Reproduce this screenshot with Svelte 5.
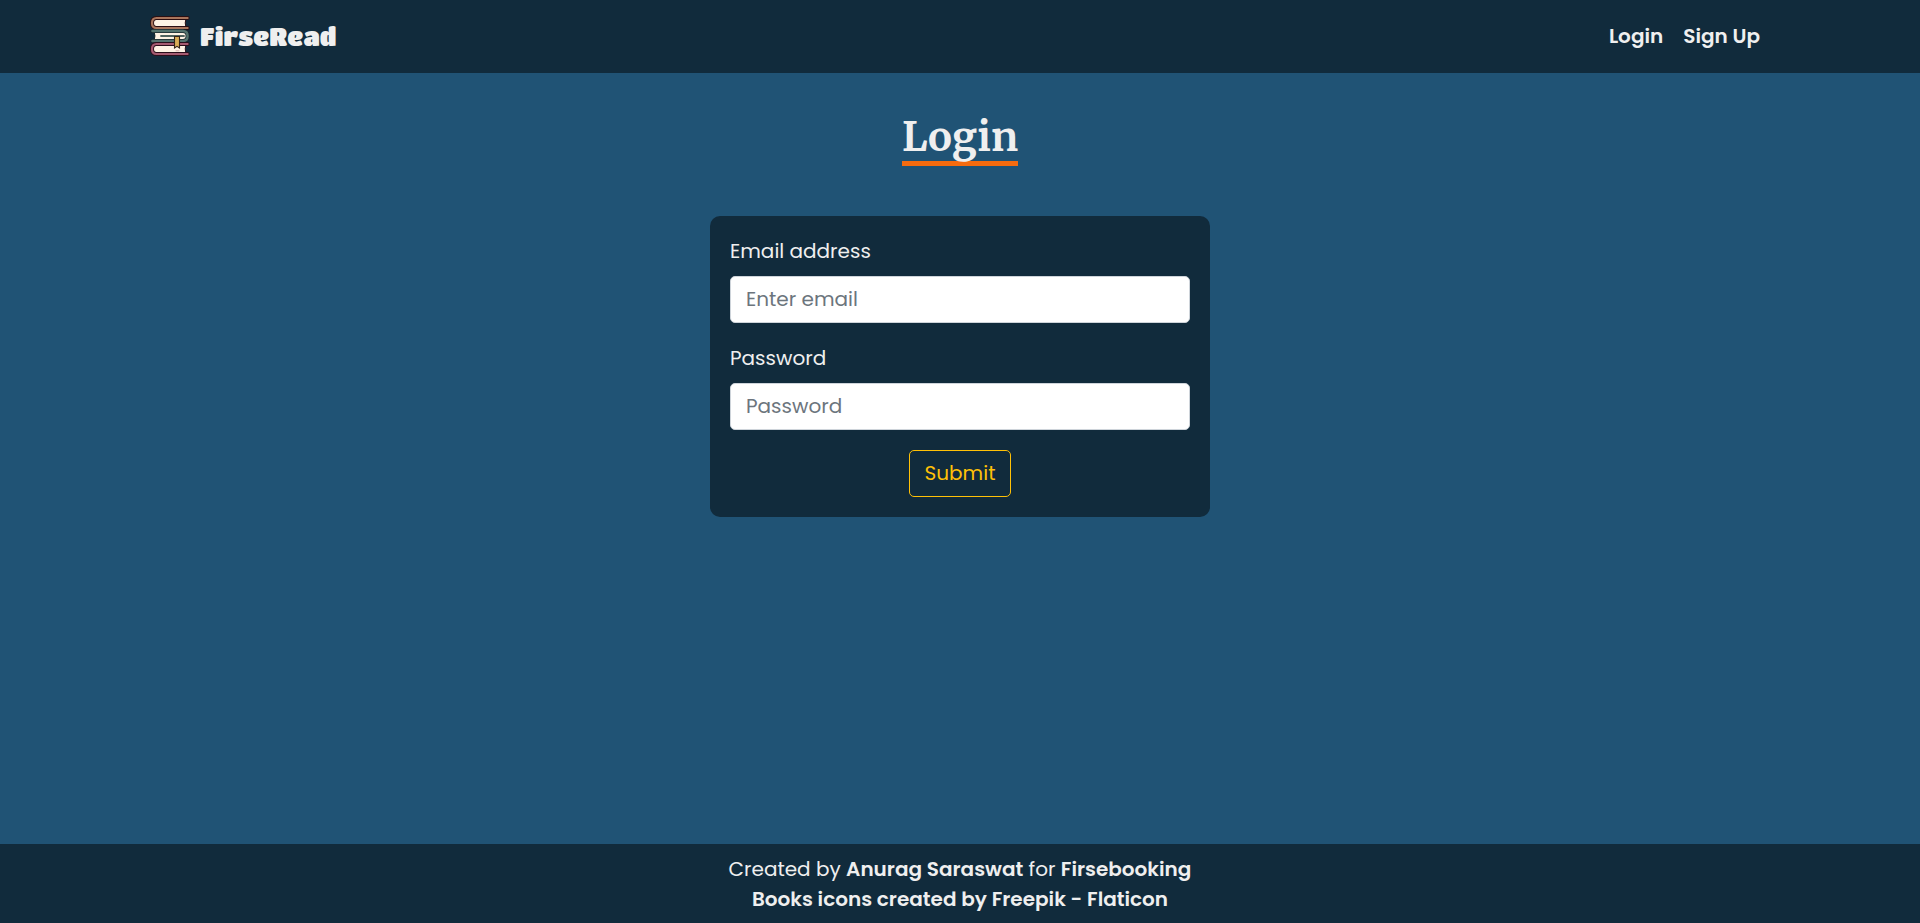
<script>
  let email = $state('');
  let password = $state('');
</script>

<div class="page">
  <header>
    <nav class="bar">
      <a class="brand" href="#home">
        <svg viewBox="0 0 40 40" width="40" height="40" aria-hidden="true">
          <g fill="none" stroke-linecap="round">
            <path d="M36 2H6Q2 2 2 7T6 12H36Q34.4 7 36 2Z" fill="#fff3e4" stroke="#2b0f12" />
            <path d="M37.6 2H6.5Q2 2 2 7T6.5 12H37.6" stroke="#2b0f12" stroke-width="4" />
            <path d="M37.6 2H6.5Q2 2 2 7T6.5 12H37.6" stroke="#a9755c" stroke-width="2.2" />
            <path d="M4 15H33Q38 15 38 20T33 25H4Q6 20 4 15Z" fill="#fff3e4" stroke="#18272c" />
            <path d="M2.4 15H33Q37.6 15 37.6 20T33 25H2.4" stroke="#18272c" stroke-width="4" />
            <path d="M2.4 15H33Q37.6 15 37.6 20T33 25H2.4" stroke="#54736e" stroke-width="2.4" />
            <path d="M11 20H34" stroke="#51645f" stroke-width="1.8" />
            <path d="M36 28H6Q2 28 2 33T6 38H36Q34.4 33 36 28Z" fill="#fff3e4" stroke="#2b0f1b" />
            <path d="M37.6 28H6.5Q2 28 2 33T6.5 38H37.6" stroke="#2b0f1b" stroke-width="4" />
            <path d="M37.6 28H6.5Q2 28 2 33T6.5 38H37.6" stroke="#a55a70" stroke-width="2.2" />
            <path d="M24.5 20.5H29.5V32L27 30.3L24.5 32Z" fill="#d9ac55" stroke="#332319" stroke-width="1.1" />
            <path d="M26 34.8H29" stroke="#d9b3ae" stroke-width="1" />
          </g>
        </svg>
        <span>FirseRead</span>
      </a>
      <div class="links">
        <a href="#login">Login</a>
        <a href="#signup">Sign Up</a>
      </div>
    </nav>
  </header>

  <main>
    <h1>Login</h1>
    <form onsubmit={(e) => e.preventDefault()}>
      <div class="field">
        <label for="email">Email address</label>
        <input id="email" type="email" placeholder="Enter email" bind:value={email} />
      </div>
      <div class="field">
        <label for="password">Password</label>
        <input id="password" type="password" placeholder="Password" bind:value={password} />
      </div>
      <button type="submit">Submit</button>
    </form>
  </main>

  <footer>
    <p>Created by <b>Anurag Saraswat</b> for <b>Firsebooking</b></p>
    <a href="#icons">Books icons created by Freepik - Flaticon</a>
  </footer>
</div>

<style>
  :global(body) {
    margin: 0;
  }
  .page {
    min-height: 100vh;
    display: flex;
    flex-direction: column;
    background: #205375;
    color: #efefef;
    font: 400 20px/30px Poppins, Inter, sans-serif;
  }
  a {
    color: inherit;
    text-decoration: none;
  }
  header,
  footer {
    background: #112b3c;
  }
  .bar {
    box-sizing: border-box;
    max-width: 1620px;
    margin: 0 auto;
    padding: 16px 0 17px;
    display: flex;
    align-items: center;
    justify-content: space-between;
  }
  .brand {
    display: flex;
    align-items: center;
    gap: 10px;
    font-family: "Titan One", Inter, sans-serif;
    font-size: 25px;
    font-weight: 400;
  }
  .links {
    display: flex;
    font-weight: 600;
  }
  .links a {
    padding: 0 10px;
  }
  main {
    flex: 1;
    display: flex;
    flex-direction: column;
    align-items: center;
    padding: 40px 20px;
  }
  h1 {
    margin: 0 0 50px;
    border-bottom: 5px solid #f66b0e;
    font: 700 40px/48px Merriweather, "Liberation Serif", serif;
  }
  form {
    box-sizing: border-box;
    width: 100%;
    max-width: 500px;
    padding: 20px;
    border-radius: 10px;
    background: #112b3c;
    display: flex;
    flex-direction: column;
    gap: 20px;
  }
  .field {
    display: flex;
    flex-direction: column;
    gap: 10px;
  }
  input,
  button {
    box-sizing: border-box;
    height: 47px;
    padding: 0 15px 1px;
    border: 1px solid #ced4da;
    border-radius: 5px;
    font: inherit;
  }
  input {
    background: #fff;
    color: #212529;
  }
  input::placeholder {
    color: #6c757d;
    opacity: 1;
  }
  button {
    align-self: center;
    border-color: #ffc107;
    background: transparent;
    color: #ffc107;
    cursor: pointer;
  }
  footer {
    padding: 10px 20px 9px;
    display: flex;
    flex-direction: column;
    align-items: center;
    text-align: center;
  }
  footer p {
    margin: 0;
  }
  footer b,
  footer a {
    font-weight: 600;
  }
</style>
